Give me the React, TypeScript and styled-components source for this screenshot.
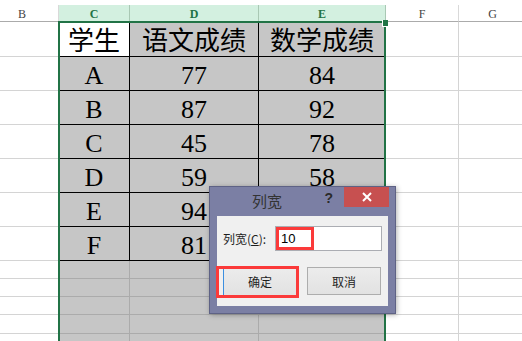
import React from "react";
import styled, { createGlobalStyle, css } from "styled-components";

const GlobalStyle = createGlobalStyle`
  html, body { margin: 0; padding: 0; background: #ffffff; overflow: hidden; }
  body { font-family: "Liberation Serif", "Noto Sans CJK SC", serif; }
  * { box-sizing: border-box; }
`;

type Kind = "plain" | "table" | "active" | "sel";

const cols = [
  { key: "B", w: 59, sel: false },
  { key: "C", w: 71, sel: true },
  { key: "D", w: 129, sel: true },
  { key: "E", w: 127, sel: true },
  { key: "F", w: 73, sel: false },
  { key: "G", w: 68, sel: false },
];

// E6 and E7 lie fully under the dialog in the reference, so they are left blank.
const tableRows: string[][] = [
  ["学生", "语文成绩", "数学成绩"],
  ["A", "77", "84"],
  ["B", "87", "92"],
  ["C", "45", "78"],
  ["D", "59", "58"],
  ["E", "94", ""],
  ["F", "81", ""],
];

const extraRowHeights = [18, 18, 18, 19, 18];

const Sheet = styled.div`
  position: relative;
  width: 522px;
  height: 341px;
  overflow: hidden;
  padding-top: 5px;
  background: #ffffff;
`;

const Row = styled.div<{ $h: number }>`
  display: flex;
  height: ${(p) => p.$h}px;
  width: 600px;
`;

const HeadCell = styled.div<{ $w: number; $sel: boolean; $shift?: number }>`
  flex: 0 0 ${(p) => p.$w}px;
  height: 100%;
  display: flex;
  align-items: center;
  justify-content: center;
  padding-top: 1px;
  padding-right: ${(p) => p.$shift ?? 0}px;
  font-family: "Liberation Serif", serif;
  font-size: 12px;
  line-height: 14px;
  border-bottom: 1px solid #ababab;
  ${(p) =>
    p.$sel
      ? css`
          background: #d3f0e0;
          color: #217346;
          font-weight: bold;
          border-right: 1px solid #a9c8b4;
        `
      : css`
          background: #ffffff;
          color: #444444;
          border-right: 1px solid #d9d9d9;
        `}
`;

const Cell = styled.div<{ $w: number; $kind: Kind }>`
  flex: 0 0 ${(p) => p.$w}px;
  height: 100%;
  display: flex;
  align-items: flex-end;
  justify-content: center;
  font-size: 26px;
  line-height: 28px;
  color: #000000;
  white-space: nowrap;
  overflow: hidden;
  ${(p) => {
    switch (p.$kind) {
      case "table":
        return css`
          background: #c6c6c6;
          border-right: 1px solid #000000;
          border-bottom: 1px solid #000000;
        `;
      case "active":
        return css`
          background: #ffffff;
          border-right: 1px solid #000000;
          border-bottom: 1px solid #000000;
        `;
      case "sel":
        return css`
          background: #c6c6c6;
          border-right: 1px solid #ababab;
          border-bottom: 1px solid #ababab;
        `;
      default:
        return css`
          background: #ffffff;
          border-right: 1px solid #d4d4d4;
          border-bottom: 1px solid #d4d4d4;
        `;
    }
  }}
`;

const SelectionBox = styled.div`
  position: absolute;
  left: 58px;
  top: 21px;
  width: 328px;
  height: 400px;
  border: 2px solid #217346;
  pointer-events: none;
`;

const FillHandle = styled.div`
  position: absolute;
  left: 382px;
  top: 20px;
  width: 6px;
  height: 7px;
  background: #217346;
  border-left: 1px solid #ffffff;
  border-bottom: 1px solid #ffffff;
`;

/* ---------- Dialog ---------- */

const Dialog = styled.div`
  position: absolute;
  left: 209px;
  top: 186px;
  width: 187px;
  height: 128px;
  display: flex;
  flex-direction: column;
  background: #7b7fa4;
  border: 1px solid #5e6285;
  padding: 0 7px 7px 7px;
  box-shadow: 1px 1px 5px rgba(0, 0, 0, 0.3);
  font-family: "Noto Sans CJK SC", "Liberation Sans", sans-serif;
`;

const TitleBar = styled.div`
  display: flex;
  align-items: center;
  height: 29px;
  margin: 0 -7px;
  padding-right: 6px;
`;

const Title = styled.div`
  margin-left: 42px;
  padding-bottom: 1px;
  font-size: 15px;
  line-height: 18px;
  color: #333333;
`;

const Help = styled.div`
  margin-left: auto;
  margin-right: 11px;
  margin-bottom: 8px;
  font-family: "Liberation Sans", sans-serif;
  font-weight: bold;
  font-size: 14px;
  line-height: 10px;
  color: #2b2b2b;
`;

const CloseButton = styled.div`
  align-self: flex-start;
  width: 45px;
  height: 20px;
  background: #c75050;
  display: flex;
  align-items: center;
  justify-content: center;
  svg { display: block; }
`;

const Content = styled.div`
  flex: 1;
  background: #f0f0f0;
  padding: 10px 6px 0 6px;
  display: flex;
  flex-direction: column;
`;

const FieldRow = styled.div`
  display: flex;
  align-items: center;
  height: 25px;
`;

const Label = styled.div`
  width: 52px;
  font-size: 12px;
  line-height: 14px;
  color: #1e1e1e;
  u { text-decoration: underline; }
`;

const InputBox = styled.div`
  position: relative;
  width: 107px;
  height: 25px;
  background: #ffffff;
  border: 1px solid #abadb3;
  padding-left: 5px;
  display: flex;
  align-items: center;
  font-family: "Liberation Sans", sans-serif;
  font-size: 13px;
  color: #000000;
`;

const Highlight = styled.div<{ $l: number; $t: number; $w: number; $h: number }>`
  position: absolute;
  left: ${(p) => p.$l}px;
  top: ${(p) => p.$t}px;
  width: ${(p) => p.$w}px;
  height: ${(p) => p.$h}px;
  border: 3px solid #fb3a3a;
  pointer-events: none;
`;

const ButtonRow = styled.div`
  display: flex;
  gap: 10px;
  margin-top: 16px;
`;

const Button = styled.div<{ $default?: boolean }>`
  position: relative;
  width: 74px;
  height: ${(p) => (p.$default ? 29 : 28)}px;
  display: flex;
  align-items: center;
  justify-content: center;
  font-size: 12px;
  color: #1e1e1e;
  background: linear-gradient(#ececec, #e2e2e2);
  border: 1px solid ${(p) => (p.$default ? "#3c8fe0" : "#adadad")};
`;

export default function App() {
  return (
    <>
      <GlobalStyle />
      <Sheet>
        <Row $h={17}>
          {cols.map((c) => (
            <HeadCell key={c.key} $w={c.w} $sel={c.sel} $shift={c.key === "B" ? 14 : 0}>
              {c.key}
            </HeadCell>
          ))}
        </Row>
        {tableRows.map((r, i) => (
          <Row key={i} $h={i === 0 ? 35 : 34}>
            <Cell $w={cols[0].w} $kind="plain" />
            {r.map((v, j) => (
              <Cell key={j} $w={cols[j + 1].w} $kind={i === 0 && j === 0 ? "active" : "table"}>
                {v}
              </Cell>
            ))}
            <Cell $w={cols[4].w} $kind="plain" />
            <Cell $w={cols[5].w} $kind="plain" />
          </Row>
        ))}
        {extraRowHeights.map((h, i) => (
          <Row key={`x${i}`} $h={h}>
            <Cell $w={cols[0].w} $kind="plain" />
            <Cell $w={cols[1].w} $kind="sel" />
            <Cell $w={cols[2].w} $kind="sel" />
            <Cell $w={cols[3].w} $kind="sel" />
            <Cell $w={cols[4].w} $kind="plain" />
            <Cell $w={cols[5].w} $kind="plain" />
          </Row>
        ))}
        <SelectionBox />
        <FillHandle />

        <Dialog>
          <TitleBar>
            <Title>列宽</Title>
            <Help>?</Help>
            <CloseButton>
              <svg width="10" height="10" viewBox="0 0 10 10">
                <path d="M1 1 L9 9 M9 1 L1 9" stroke="#ffffff" strokeWidth="2" />
              </svg>
            </CloseButton>
          </TitleBar>
          <Content>
            <FieldRow>
              <Label>
                列宽(<u>C</u>):
              </Label>
              <InputBox>
                10
                <Highlight $l={0} $t={0} $w={38} $h={23} />
              </InputBox>
            </FieldRow>
            <ButtonRow>
              <Button $default>
                确定
                <Highlight $l={-8} $t={-2} $w={83} $h={32} />
              </Button>
              <Button>取消</Button>
            </ButtonRow>
          </Content>
        </Dialog>
      </Sheet>
    </>
  );
}
